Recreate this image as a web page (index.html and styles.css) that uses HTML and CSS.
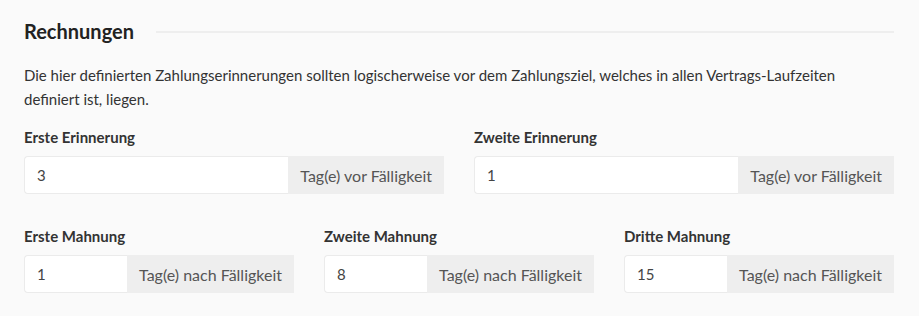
FILE: index.html
```html
<!DOCTYPE html>
<html lang="de">
<head>
    <meta charset="UTF-8">
    <meta name="viewport" content="width=device-width, initial-scale=1.0">
    <title>Einstellungen - Rechnungen</title>
    <link rel="stylesheet" href="styles.css">
</head>
<body>
    <div class="section">
        <div class="section-title">
            <h2>Rechnungen</h2>
            <span class="title-line"></span>
        </div>

        <p class="hint">Die hier definierten Zahlungserinnerungen sollten logischerweise vor dem Zahlungsziel, welches in allen Vertrags-Laufzeiten definiert ist, liegen.</p>

        <div class="row row-2">
            <div class="form-group">
                <label for="reminder1">Erste Erinnerung</label>
                <div class="input-group">
                    <input type="text" id="reminder1" value="3">
                    <span class="addon">Tag(e) vor Fälligkeit</span>
                </div>
            </div>
            <div class="form-group">
                <label for="reminder2">Zweite Erinnerung</label>
                <div class="input-group">
                    <input type="text" id="reminder2" value="1">
                    <span class="addon">Tag(e) vor Fälligkeit</span>
                </div>
            </div>
        </div>

        <div class="row row-3">
            <div class="form-group">
                <label for="dunning1">Erste Mahnung</label>
                <div class="input-group">
                    <input type="text" id="dunning1" value="1">
                    <span class="addon">Tag(e) nach Fälligkeit</span>
                </div>
            </div>
            <div class="form-group">
                <label for="dunning2">Zweite Mahnung</label>
                <div class="input-group">
                    <input type="text" id="dunning2" value="8">
                    <span class="addon">Tag(e) nach Fälligkeit</span>
                </div>
            </div>
            <div class="form-group">
                <label for="dunning3">Dritte Mahnung</label>
                <div class="input-group">
                    <input type="text" id="dunning3" value="15">
                    <span class="addon">Tag(e) nach Fälligkeit</span>
                </div>
            </div>
        </div>
    </div>
</body>
</html>
```

FILE: styles.css
```css
body {
    font-family: 'Lato', 'Liberation Sans', sans-serif;
    margin: 0;
    padding: 0;
    background: #fafafa;
    color: #333;
}
.section {
    padding: 17px 25px 0 24px;
}
.section-title {
    display: flex;
    align-items: center;
    gap: 22px;
}
.section-title h2 {
    margin: 0;
    font-size: 20px;
    font-weight: bold;
    color: #222;
    line-height: 28px;
}
.title-line {
    flex: 1;
    height: 2px;
    background: #eeeeee;
    margin-top: 1px;
}
.hint {
    margin: 18px 0 16px;
    font-size: 15px;
    line-height: 24px;
    color: #333;
}
.row {
    display: grid;
    column-gap: 30px;
    margin-bottom: 32px;
}
.row-2 {
    grid-template-columns: minmax(0, 1fr) minmax(0, 1fr);
}
.row-3 {
    grid-template-columns: minmax(0, 1fr) minmax(0, 1fr) minmax(0, 1fr);
}
.form-group label {
    display: block;
    font-size: 15px;
    font-weight: bold;
    color: #333;
    line-height: 20px;
    margin-bottom: 9px;
}
.input-group {
    display: flex;
    height: 38px;
}
.input-group input {
    flex: 1;
    min-width: 0;
    box-sizing: border-box;
    height: 38px;
    padding: 0 12px;
    font-family: inherit;
    font-size: 15px;
    color: #444;
    background: #fff;
    border: 1px solid #ebebeb;
    border-right: none;
    border-radius: 4px 0 0 4px;
    outline: none;
}
.addon {
    display: flex;
    align-items: center;
    padding: 0 12px;
    font-size: 16px;
    color: #555;
    background: #eeeeee;
    white-space: nowrap;
}
```
